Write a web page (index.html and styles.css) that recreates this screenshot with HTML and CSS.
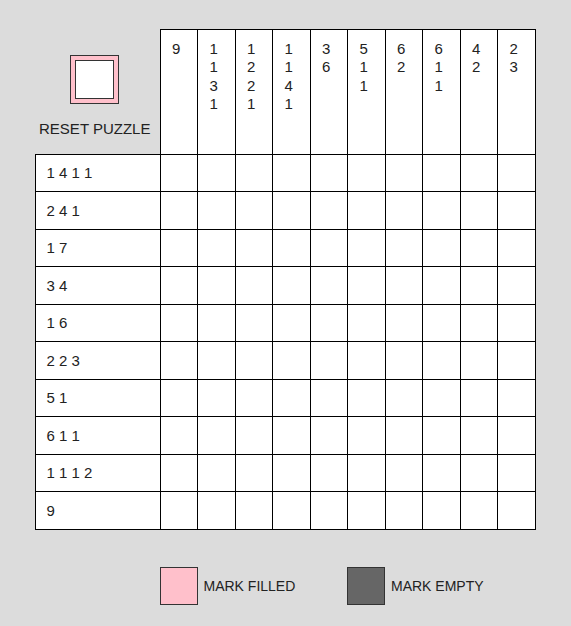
FILE: index.html
```html
<!DOCTYPE html>
<html lang="en">
<head>
    <meta charset="UTF-8">
    <meta name="viewport" content="width=device-width, initial-scale=1.0">
    <title>Nonogram</title>
    <link rel="stylesheet" href="styles.css">
</head>
<body>
    <div class="puzzle">
        <table class="board" id="board">
            <colgroup>
                <col class="col-clue">
                <col span="10" class="col-cell">
            </colgroup>
            <tr class="head-row">
                <td class="corner">
                    <button class="reset-btn" type="button" aria-label="Reset puzzle"><span class="reset-inner"></span></button>
                    <div class="reset-label">RESET PUZZLE</div>
                </td>
                <td class="col-hint">9</td>
                <td class="col-hint">1<br>1<br>3<br>1</td>
                <td class="col-hint">1<br>2<br>2<br>1</td>
                <td class="col-hint">1<br>1<br>4<br>1</td>
                <td class="col-hint">3<br>6</td>
                <td class="col-hint">5<br>1<br>1</td>
                <td class="col-hint">6<br>2</td>
                <td class="col-hint">6<br>1<br>1</td>
                <td class="col-hint">4<br>2</td>
                <td class="col-hint">2<br>3</td>
            </tr>
        </table>

        <div class="legend">
            <div class="legend-item">
                <span class="swatch swatch-filled"></span>
                <span class="legend-text">MARK FILLED</span>
            </div>
            <div class="legend-item">
                <span class="swatch swatch-empty"></span>
                <span class="legend-text">MARK EMPTY</span>
            </div>
        </div>
    </div>

    <script>
        // подсказки для строк
        const rowHints = ['1 4 1 1', '2 4 1', '1 7', '3 4', '1 6', '2 2 3', '5 1', '6 1 1', '1 1 1 2', '9'];
        const board = document.getElementById('board');

        rowHints.forEach(hint => {
            const tr = document.createElement('tr');
            tr.className = 'grid-row';
            const th = document.createElement('td');
            th.className = 'row-hint';
            th.textContent = hint;
            tr.appendChild(th);
            for (let i = 0; i < 10; i++) {
                const td = document.createElement('td');
                td.className = 'cell';
                tr.appendChild(td);
            }
            board.appendChild(tr);
        });
    </script>
</body>
</html>
```

FILE: styles.css
```css
body {
    margin: 0;
    background-color: #dcdcdc;
    font-family: "Liberation Sans", Arial, sans-serif;
    color: #222;
}
.puzzle {
    padding: 28.5px 0 0 34.5px;
}
.board {
    border-collapse: collapse;
    table-layout: fixed;
    width: 501px;
}
.col-clue {
    width: 125px;
}
.col-cell {
    width: 37.5px;
}
.board td {
    border: 1px solid #000;
    background-color: #fff;
    padding: 0;
}
.head-row {
    height: 125px;
}
.grid-row {
    height: 37.5px;
}
.board td.corner {
    border-top: none;
    border-left: none;
    background-color: transparent;
    vertical-align: top;
    text-align: center;
    padding: 26px 5px 0 0;
}
.reset-btn {
    display: inline-block;
    width: 49px;
    height: 49px;
    padding: 4px;
    margin: 0;
    border: 1px solid #333;
    background-color: #ffc0cb;
    box-sizing: border-box;
    cursor: pointer;
    vertical-align: top;
}
.reset-inner {
    display: block;
    width: 39px;
    height: 39px;
    border: 1px solid #333;
    background-color: #fff;
    box-sizing: border-box;
}
.reset-label {
    margin-top: 16px;
    font-size: 15px;
}
.board td.col-hint {
    vertical-align: top;
    text-align: left;
    font-size: 15px;
    line-height: 18.5px;
    padding: 10px 0 0 11.5px;
}
.board td.row-hint {
    font-size: 15px;
    padding-left: 11px;
}
.legend {
    display: flex;
    margin-top: 37px;
    padding-left: 125px;
}
.legend-item {
    display: flex;
    align-items: center;
    width: 187.5px;
}
.swatch {
    width: 38px;
    height: 38px;
    border: 1px solid #333;
    box-sizing: border-box;
}
.swatch-filled {
    background-color: #ffc0cb;
}
.swatch-empty {
    background-color: #666;
}
.legend-text {
    margin-left: 6px;
    font-size: 14px;
}
```
